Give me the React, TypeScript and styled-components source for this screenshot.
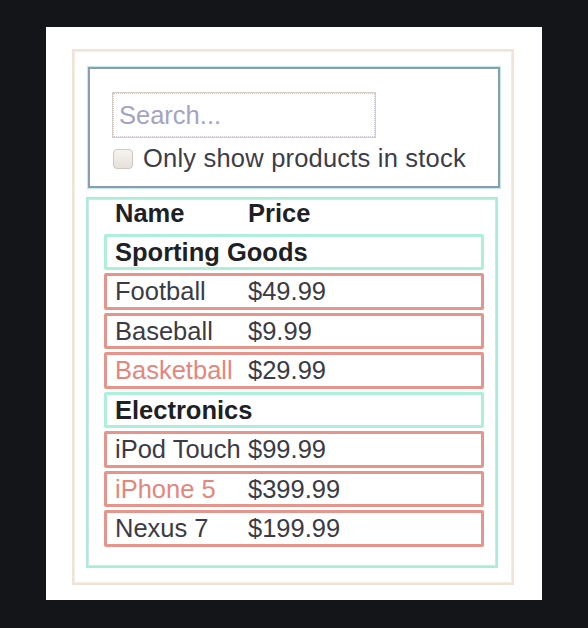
import React from "react";
import styled, { createGlobalStyle } from "styled-components";

const GlobalStyle = createGlobalStyle`
  html, body {
    margin: 0;
    padding: 0;
    background: #141518;
  }
  body {
    font-family: "Liberation Sans", Arial, Helvetica, sans-serif;
  }
`;

const Page = styled.div`
  padding: 27px 0 28px 46px;
`;

const Card = styled.div`
  width: 496px;
  height: 573px;
  background: #ffffff;
  box-sizing: border-box;
  padding: 22px 0 0 26px;
`;

const FilterableTable = styled.div`
  width: 442px;
  height: 536px;
  box-sizing: border-box;
  border: 2px solid #efe3da;
  box-shadow: inset 0 0 0 1px #f5ece6;
  padding-top: 16px;
  display: flex;
  flex-direction: column;
  gap: 9px;
`;

const SearchBar = styled.form`
  margin: 0 0 0 14px;
  width: 412px;
  height: 121px;
  box-sizing: border-box;
  border: 2px solid #8c9cb7;
  box-shadow: 0 0 0 1px #c4ece2;
  padding: 23px 0 0 22px;
  display: flex;
  flex-direction: column;
  gap: 10px;
`;

const SearchInput = styled.input`
  width: 264px;
  height: 46px;
  box-sizing: border-box;
  border: 1px solid #dccdc4;
  outline: 1px dotted #cfc6d6;
  outline-offset: -2px;
  padding: 0 0 0 6px;
  font-family: "Liberation Sans", Arial, sans-serif;
  font-size: 25.5px;
  color: #3b3b45;
  background: #fff;
  &::placeholder {
    color: #a4a3c3;
  }
`;

const StockLabel = styled.label`
  display: flex;
  align-items: center;
  gap: 10px;
  height: 21px;
  font-size: 25.5px;
  line-height: 21px;
  letter-spacing: 0.2px;
  color: #3d3d47;
`;

const CheckBox = styled.input`
  appearance: none;
  margin: 0 0 0 1px;
  width: 20px;
  height: 20px;
  box-sizing: border-box;
  border: 1px solid #d2c6bd;
  border-radius: 4px;
  background: linear-gradient(#f6f3f0, #e6e0db);
`;

const ProductTable = styled.div`
  margin: 0 0 0 12px;
  width: 412px;
  height: 371px;
  box-sizing: border-box;
  border: 2px solid #a9ecd8;
  box-shadow: inset 0 0 0 1px #cfe6ee;
  display: flex;
  flex-direction: column;
`;

const HeaderRow = styled.div`
  margin-left: 16px;
  width: 380px;
  height: 28px;
  box-sizing: border-box;
  padding: 0 11px;
  display: grid;
  grid-template-columns: 133px 1fr;
  align-items: center;
  font-size: 25.5px;
  font-weight: 700;
  color: #1f1f26;
`;

const Rows = styled.div`
  margin: 6.5px 0 0 16px;
  display: flex;
  flex-direction: column;
  gap: 3px;
`;

const Row = styled.div<{ $kind: "category" | "product" }>`
  width: 380px;
  height: 36.5px;
  box-sizing: border-box;
  border: 3px solid ${(p) => (p.$kind === "category" ? "#aeefda" : "#e6958c")};
  border-radius: 2px;
  padding: 0 8px;
  display: grid;
  grid-template-columns: 133px 1fr;
  align-items: center;
  font-size: 25.5px;
  line-height: 30px;
  font-weight: ${(p) => (p.$kind === "category" ? 700 : 400)};
  color: ${(p) => (p.$kind === "category" ? "#1f1f26" : "#3b3b45")};
  white-space: nowrap;
`;

const CategoryName = styled.span`
  grid-column: 1 / 3;
`;

const Name = styled.span<{ $out?: boolean }>`
  color: ${(p) => (p.$out ? "#e4867c" : "inherit")};
`;

const Price = styled.span``;

type Product = { category: string; price: string; stocked: boolean; name: string };

const PRODUCTS: Product[] = [
  { category: "Sporting Goods", price: "$49.99", stocked: true, name: "Football" },
  { category: "Sporting Goods", price: "$9.99", stocked: true, name: "Baseball" },
  { category: "Sporting Goods", price: "$29.99", stocked: false, name: "Basketball" },
  { category: "Electronics", price: "$99.99", stocked: true, name: "iPod Touch" },
  { category: "Electronics", price: "$399.99", stocked: false, name: "iPhone 5" },
  { category: "Electronics", price: "$199.99", stocked: true, name: "Nexus 7" },
];

export default function App() {
  const rows: React.ReactNode[] = [];
  let last = "";
  PRODUCTS.forEach((p) => {
    if (p.category !== last) {
      rows.push(
        <Row key={"c-" + p.category} $kind="category">
          <CategoryName>{p.category}</CategoryName>
        </Row>
      );
      last = p.category;
    }
    rows.push(
      <Row key={p.name} $kind="product">
        <Name $out={!p.stocked}>{p.name}</Name>
        <Price>{p.price}</Price>
      </Row>
    );
  });

  return (
    <>
      <GlobalStyle />
      <Page>
        <Card>
          <FilterableTable>
            <SearchBar onSubmit={(e) => e.preventDefault()}>
              <SearchInput type="text" placeholder="Search..." />
              <StockLabel>
                <CheckBox type="checkbox" />
                Only show products in stock
              </StockLabel>
            </SearchBar>
            <ProductTable>
              <HeaderRow>
                <span>Name</span>
                <span>Price</span>
              </HeaderRow>
              <Rows>{rows}</Rows>
            </ProductTable>
          </FilterableTable>
        </Card>
      </Page>
    </>
  );
}
